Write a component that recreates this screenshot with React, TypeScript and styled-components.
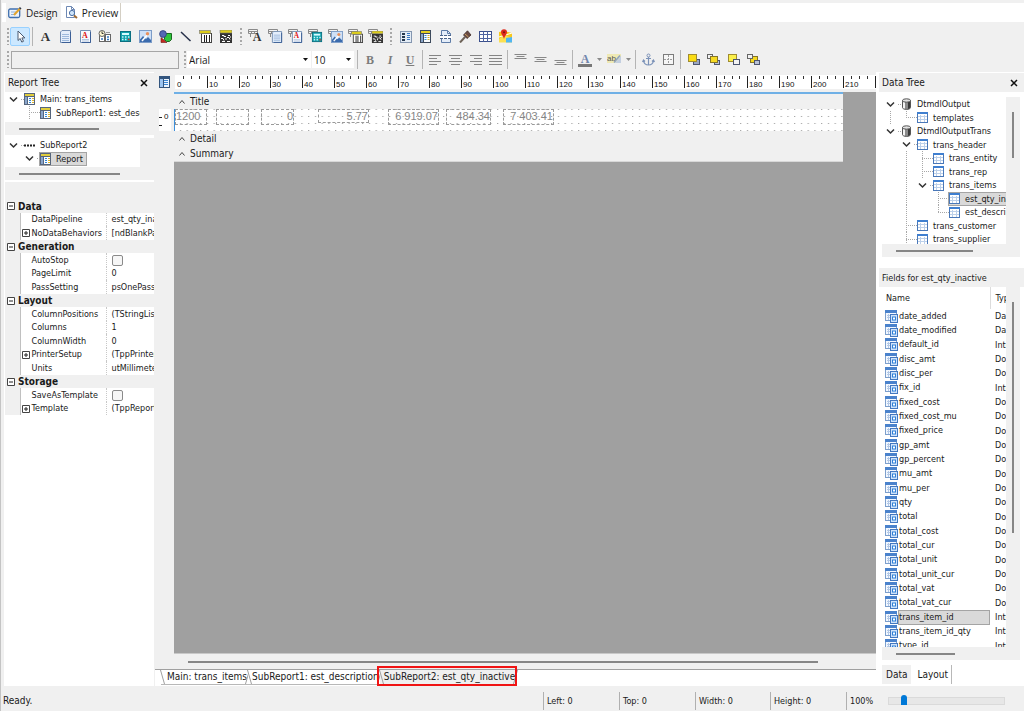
import React, { ReactNode } from 'react';
import styled, { createGlobalStyle, css } from 'styled-components';

const face = '#f0f0f0';
const edge = '#a0a0a0';
const ui = '"DejaVu Sans Condensed", "DejaVu Sans", sans-serif';
const segoe = '"Open Sans", "Noto Sans", sans-serif';

const GlobalStyle = createGlobalStyle`
  * { box-sizing: border-box; }
  html, body { margin: 0; padding: 0; background: ${face}; }
  body { font: 10px/14px ${ui}; color: #1a1a1a; overflow: hidden; }
  button, select, input { font: inherit; color: inherit; margin: 0; padding: 0; }
  svg { display: block; flex: none; }
`;

/* ---------- frame ---------- */

const Window = styled.div`
  display: flex;
  flex-direction: column;
  height: 100vh;
  border-left: 1px solid #c4c4c4;
  background: ${face};
`;

const PageTabs = styled.nav`
  display: flex;
  height: 19px;
  margin: 3px 0 0 1px;
  padding-left: 4px;
  background: #fff;
`;

const PageTab = styled.button<{ $active?: boolean }>`
  display: flex;
  align-items: center;
  gap: 4px;
  padding: 0 2px;
  border: 0;
  background: ${p => (p.$active ? face : '#fff')};
  border-right: 1px solid ${p => (p.$active ? face : '#d4cfc4')};
  font: 10px/18px ${segoe};
  & + & { padding: 0 2px 0 4px; }
`;

const Toolbar = styled.div<{ $tall?: boolean }>`
  display: flex;
  flex: none;
  align-items: center;
  height: ${p => (p.$tall ? 28 : 22)}px;
  padding-left: 5px;
  padding-bottom: ${p => (p.$tall ? 0 : 3)}px;
`;

const Grip = styled.span`
  width: 3px;
  height: 17px;
  margin-left: 1px;
  background: radial-gradient(circle at 1px 1px, #a8a8a8 1px, transparent 1px) 0 0 / 3px 4px;
`;

const Divider = styled.span`
  width: 1px;
  height: 19px;
  margin: 0 2px;
  background: #b4b4b4;
`;

const Tool = styled.button<{ $on?: boolean; $wide?: boolean }>`
  display: flex;
  align-items: center;
  justify-content: center;
  gap: 5px;
  width: ${p => (p.$wide ? 29 : 20)}px;
  height: 19px;
  border: 1px solid ${p => (p.$on ? '#99d1ff' : 'transparent')};
  border-radius: 2px;
  background: ${p => (p.$on ? '#cce8ff' : 'transparent')};
`;

const ToolGroup = styled.div<{ $gap?: number }>`
  display: flex;
  margin-left: ${p => p.$gap ?? 0}px;
`;

const NameBox = styled.input`
  width: 168px;
  height: 18px;
  && { margin: 0 4px 0 1px; }
  border: 1px solid #a6a6a6;
  background: ${face};
`;

const Combo = styled.label<{ $size: number }>`
  display: flex;
  align-items: center;
  width: ${p => p.$size}px;
  height: 17px;
  margin-right: 1px;
  padding-right: 3px;
  background: #fff;
  font: 10px/16px ${segoe};
  select {
    flex: 1;
    min-width: 0;
    height: 16px;
    padding-left: 2px;
    border: 0;
    background: transparent;
    appearance: none;
    outline: none;
  }
`;

const Main = styled.main`
  display: flex;
  flex: 1;
  min-height: 0;
`;

/* ---------- side panels ---------- */

const Side = styled.section<{ $right?: boolean }>`
  display: flex;
  flex: none;
  flex-direction: column;
  width: ${p => (p.$right ? 148 : 150)}px;
  margin-left: ${p => (p.$right ? 0 : 3)}px;
  padding-left: ${p => (p.$right ? 3 : 1)}px;
  background: #fff;
`;

const PanelTitle = styled.header<{ $offset?: number; $small?: boolean }>`
  display: flex;
  flex: none;
  align-items: center;
  justify-content: space-between;
  height: 19px;
  margin-top: ${p => p.$offset ?? 1}px;
  padding: 0 4px 0 3px;
  background: ${face};
  font-size: ${p => (p.$small ? 9 : 10)}px;
  h2 { margin: 0; font: inherit; }
`;

const CloseButton = styled.button`
  padding: 2px;
  border: 0;
  background: transparent;
`;

const ScrollPane = styled.div<{ $h?: number; $inset?: number; $top?: number }>`
  display: grid;
  grid-template: minmax(0, 1fr) 13px / minmax(0, 1fr) 14px;
  ${p => (p.$h ? css`flex: none; height: ${p.$h}px;` : css`flex: 1; min-height: 0;`)}
  margin-top: ${p => p.$top ?? 0}px;
  margin-left: ${p => p.$inset ?? 0}px;
  margin-right: ${p => (p.$inset ? 4 : 0)}px;
  font-size: 9px;
`;

const PaneBody = styled.div`
  overflow: hidden;
  background: #fff;
`;

const VBar = styled.div<{ $from: number; $len: number }>`
  padding: ${p => p.$from}px 0 0 6px;
  background: ${face};
  &::before {
    content: '';
    display: block;
    width: 2px;
    height: ${p => p.$len}px;
    background: ${p => (p.$len ? '#868686' : 'none')};
  }
`;

const HBar = styled.div<{ $len?: number }>`
  grid-column: 1 / -1;
  display: flex;
  align-items: center;
  padding: 0 0 0 14px;
  background: ${face};
  &::before {
    content: '';
    flex: ${p => (p.$len ? 'none' : 1)};
    width: ${p => p.$len ?? 0}px;
    height: 2px;
    background: #868686;
  }
`;

const Tree = styled.ul`
  margin: 0;
  padding: 0;
  list-style: none;
`;

const TreeItem = styled.li`
  display: flex;
  align-items: center;
  height: 14px;
  white-space: nowrap;
  &:nth-child(even) { height: 13px; }
`;

const dotsY = 'repeating-linear-gradient(#a8a8a8 0 1px, transparent 1px 2px)';
const dotsX = 'repeating-linear-gradient(90deg, #a8a8a8 0 1px, transparent 1px 2px)';

const Guide = styled.span<{ $kind: string }>`
  flex: none;
  width: 16px;
  height: 100%;
  display: flex;
  align-items: center;
  justify-content: center;
  background-repeat: no-repeat;
  ${p => p.$kind === '|' && css`background-image: ${dotsY}; background-size: 1px 100%; background-position: 8px 0;`}
  ${p => p.$kind === '+' && css`background-image: ${dotsY}, ${dotsX}; background-size: 1px 100%, 8px 1px; background-position: 8px 0, right center;`}
  ${p => p.$kind === 'L' && css`background-image: ${dotsY}, ${dotsX}; background-size: 1px 50%, 8px 1px; background-position: 8px 0, right center;`}
`;

const Stub = styled.span`
  flex: none;
  width: 3px;
  height: 1px;
  background: ${dotsX};
`;

const NodeLabel = styled.span<{ $selected?: boolean }>`
  display: flex;
  align-items: center;
  gap: 5px;
  height: 12px;
  padding-right: 3px;
  line-height: 12px;
  ${p => p.$selected && css`background: #d9d9d9; box-shadow: 0 0 0 1px #a4a4a4;`}
`;

const Inspector = styled.table`
  width: 100%;
  border-collapse: collapse;
  table-layout: fixed;
  flex: none;
  font-size: 9px;
  tr { height: 14px; }
  tbody tr:nth-child(even) { height: 13px; }
  td, th {
    height: inherit;
    padding: 0;
    overflow: hidden;
    font-weight: normal;
    line-height: 13px;
    text-align: left;
    white-space: nowrap;
  }
`;

const GroupCell = styled.th`
  background: ${face};
  div { display: flex; align-items: center; gap: 3px; padding-left: 2px; font-weight: bold; font-size: 10px; }
`;

const GutterCell = styled.td`
  background: ${face};
  border-right: 1px solid #c0c0c0;
`;

const NameCell = styled.th`
  div { display: flex; align-items: center; }
`;

const ExpandSlot = styled.span`
  flex: none;
  width: 11px;
  padding-left: 1px;
`;

const ValueCell = styled.td`
  border-left: 1px dotted #c8c8c8;
  && { padding-left: 5px; }
  input {
    display: block;
    width: 11px;
    height: 11px;
    border: 1px solid #8a8a8a;
    border-radius: 2px;
    background: #f6f6f6;
    appearance: none;
  }
`;

const InspectorHead = styled.div`
  flex: none;
  height: 17px;
  margin-top: 2px;
  background: ${face};
`;

/* ---------- design surface ---------- */

const Workspace = styled.section`
  display: flex;
  flex: 1;
  flex-direction: column;
  min-width: 0;
  margin-left: 1px;
`;

const RulerRow = styled.div`
  display: flex;
  flex: none;
  align-items: center;
  height: 20px;
  padding-left: 4px;
  gap: 5px;
`;

const RulerTrack = styled.div`
  flex: 1;
  height: 14px;
  overflow: hidden;
  background: #fff;
`;

const Surface = styled.div`
  display: flex;
  flex: 1;
  min-height: 0;
`;

const SideRuler = styled.div`
  flex: none;
  width: 12px;
  height: 22px;
  margin: 17px 3px 0 4px;
  background: #fff;
`;

const Desk = styled.div`
  flex: 1;
  min-width: 0;
  border-bottom: 1px solid #c8c8c8;
  background: #a0a0a0;
`;

const Paper = styled.div`
  width: 669px;
  max-width: 100%;
  border-top: 2px solid #6fb0e6;
  border-bottom: 1px solid #d8d8d8;
  background: ${face};
`;

const Band = styled.div`
  display: flex;
  align-items: center;
  gap: 4px;
  height: 15px;
  padding-left: 4px;
  line-height: 15px;
`;

const Canvas = styled.div`
  position: relative;
  height: 22px;
  border-left: 1px solid #3c8fdc;
  background: #fff;
  overflow: hidden;
`;

const ReportField = styled.div<{ $x: number; $w: number; $short?: boolean; $left?: boolean }>`
  position: absolute;
  top: 0;
  left: ${p => p.$x}px;
  width: ${p => p.$w}px;
  height: ${p => (p.$short ? 14 : 16)}px;
  border: 1px dashed #9a9a9a;
  font: 11px/13px "Liberation Sans", Arial, sans-serif;
  color: #868686;
  text-align: ${p => (p.$left ? 'left' : 'right')};
`;

const SurfaceScroll = styled(HBar)`
  flex: none;
  height: 15px;
  padding: 0 58px 0 33px;
`;

const SheetTabs = styled.nav`
  display: flex;
  flex: none;
  height: 17px;
  padding-left: 6px;
  border-top: 1px solid ${edge};
  background: #fff;
`;

const SheetTab = styled.button<{ $marked?: boolean }>`
  position: relative;
  height: 15px;
  padding: 0 1px 0 6px;
  border: 0;
  background: ${p => (p.$marked ? face : '#fff')};
  line-height: 14px;
  white-space: nowrap;
  border-bottom: 1px solid #b8b8b8;
  & + & { padding-left: 4px; }
  &::before, &::after {
    content: '';
    position: absolute;
    top: 0;
    width: 1px;
    height: 14px;
    background: ${edge};
  }
  &::before { left: 1px; transform: skewX(16deg); }
  &::after { right: 0; transform: skewX(-16deg); }
`;

const Marker = styled.span`
  position: absolute;
  z-index: 1;
  inset: -4px -1px -2px -3px;
  border: 2px solid #f01414;
`;

/* ---------- data panel ---------- */

const FieldTable = styled.table`
  width: 160px;
  border-collapse: collapse;
  table-layout: fixed;
  th, td {
    height: 14px;
    padding: 0 0 0 3px;
    font-weight: normal;
    line-height: 14px;
    text-align: left;
    white-space: nowrap;
  }
  thead th { height: 22px; }
  thead th:first-child { padding-left: 4px; }
  thead th + th { border-left: 1px solid #dcdcdc; }
  tbody tr:nth-child(3n) td { height: 15px; }
  td + td, th + th { padding-left: 5px; }
`;

const FieldName = styled.div<{ $selected?: boolean }>`
  display: flex;
  height: 14px;
  align-items: center;
  gap: 1px;
  span {
    flex: 1;
    line-height: 13px;
    margin-right: 1px;
    ${p => p.$selected && css`background: #d9d9d9; box-shadow: 0 0 0 1px #a4a4a4;`}
  }
`;

const SideTabs = styled.nav`
  display: flex;
  flex: none;
  height: 26px;
  padding: 5px 0 2px 3px;
`;

const SideTab = styled.button<{ $active?: boolean }>`
  padding: 0 3px 0 4px;
  border: 0;
  border-right: 1px solid ${p => (p.$active ? face : '#b8b8b8')};
  background: ${p => (p.$active ? face : '#fff')};
  line-height: 18px;
  & + & { padding: 0 3px 0 6px; }
`;

/* ---------- status bar ---------- */

const StatusBar = styled.footer`
  display: flex;
  flex: none;
  align-items: center;
  height: 25px;
  padding: 5px 19px 1px 2px;
`;

const StatusCell = styled.span<{ $w?: number }>`
  ${p => (p.$w ? css`flex: none; width: ${p.$w}px; padding-left: 3px; border-left: 1px solid #b0b0b0; font-size: 9px;` : css`flex: 1;`)}
  line-height: 18px;
`;

const Zoom = styled.input`
  width: 117px;
  height: 12px;
  appearance: none;
  background: transparent;
  &::-webkit-slider-runnable-track {
    height: 8px;
    border: 1px solid #dadada;
    background: #e7e7e7;
  }
  &::-webkit-slider-thumb {
    appearance: none;
    width: 6px;
    height: 10px;
    margin-top: -3px;
    border-radius: 3px 3px 0 0;
    background: #0078d7;
  }
`;

/* ---------- drawings ---------- */

const Svg = ({ w = 13, h = 13, children }: { w?: number; h?: number; children: ReactNode }) => (
  <svg width={w} height={h} viewBox={`0 0 ${w} ${h}`} aria-hidden="true">{children}</svg>
);

const Chevron = () => (
  <Svg w={9} h={7}><path d="M1 1.5 4.5 5 8 1.5" fill="none" stroke="#333" strokeWidth="1.5" /></Svg>
);
const Caret = () => (
  <Svg w={8} h={6}><path d="M1.5 4.5 4 1.5 6.5 4.5" fill="none" stroke="#444" /></Svg>
);
const Drop = ({ pale }: { pale?: boolean }) => (
  <Svg w={5} h={3}><path d="M0 0H5L2.5 3Z" fill={pale ? '#8a8a8a' : '#111'} /></Svg>
);
const CloseX = () => (
  <Svg w={8} h={8}><path d="M1 1 7 7M7 1 1 7" stroke="#111" strokeWidth="1.5" /></Svg>
);
const Box = ({ plus }: { plus?: boolean }) => (
  <Svg w={8} h={8}>
    <path d="M.5.5h7v7h-7z" fill="#fff" stroke="#444" />
    <path d={plus ? 'M2 4h4M4 2v4' : 'M2 4h4'} stroke="#222" />
  </Svg>
);
const ReportGlyph = () => (
  <Svg w={11} h={12}>
    <rect x=".5" y=".5" width="10" height="11" fill="#fbfdff" stroke="#56657c" />
    <rect x="1" y="1" width="9" height="2" fill="#e0cd3c" />
    <rect x="1" y="3" width="2" height="8" fill="#8aa6cc" />
    <path d="M3.5 3v8M1 3.5h9" stroke="#56657c" />
    <path d="M5 5.500h2M5 7.500h2M5 9.500h2" stroke="#2f86d8" />
    <path d="M8 5.500h2M8 7.500h2M8 9.500h2" stroke="#e0b52c" />
  </Svg>
);
const BandGlyph = () => (
  <Svg w={11} h={5}><path d="M0 2.500h2M3 2.500h2M6 2.500h2M9 2.500h2" stroke="#222" strokeWidth="2" /></Svg>
);
const TableGlyph = () => (
  <Svg w={11} h={11}>
    <rect x=".5" y="1.5" width="10" height="9" fill="#fff" stroke="#4a78b8" />
    <rect x="0" y="0" width="11" height="2" fill="#3f7fd0" />
    <path d="M3.500 3v7M7.500 3v7M1 4.500h9M1 7.500h9" stroke="#bcd0ea" />
  </Svg>
);
const CylinderGlyph = () => (
  <Svg w={11} h={12}>
    <path d="M1.500 2.500v7c0 2.500 8 2.500 8 0v-7z" fill="#8c8c8c" stroke="#555" />
    <path d="M2 3.500h2v7H3L2 10z" fill="#f4f4f4" />
    <path d="M7 4h2v6l-2 1z" fill="#3a3a3a" />
    <ellipse cx="5.500" cy="2.500" rx="4" ry="1.700" fill="#e2e2e2" stroke="#555" />
  </Svg>
);
const FieldGlyph = () => (
  <Svg w={13} h={13}>
    <rect x=".5" y="1.500" width="11" height="9" fill="#f3f8ff" stroke="#7d9fcc" />
    <rect x="0" y="0" width="12" height="3" fill="#4a82cc" />
    <path d="M2 5.500h3M2 7.500h3M3.500 4v6" stroke="#b4c9e6" />
    <rect x="5.500" y="4.500" width="7" height="8" fill="#cfe3fa" stroke="#4478c0" />
    <rect x="7.500" y="7" width="3" height="3" fill="#fff" stroke="#2f80d8" />
  </Svg>
);

const Pointer = () => (
  <Svg><path d="M4 1v9.500l2.200-2 1.600 3.600 1.700-.8-1.600-3.400h3z" fill="#fff" stroke="#4a5a70" /></Svg>
);
const LetterA = () => (
  <Svg><text x="6.500" y="11" textAnchor="middle" fontFamily="Liberation Serif, serif" fontWeight="bold" fontSize="13" fill="#333">A</text></Svg>
);
const Memo = () => (
  <Svg>
    <path d="M3 .5h8.500v12h-10V2z" fill="#e4eefb" stroke="#7590b4" />
    <path d="M3 4.500h7M3 6.500h7M3 8.500h7M3 10.500h7" stroke="#9db9dc" />
    <path d="M11.500 2v10.500H3" fill="none" stroke="#3c5f96" />
  </Svg>
);
const RichText = () => (
  <Svg>
    <path d="M1.500.5h10v12h-10z" fill="#f6f9fe" stroke="#7590b4" />
    <text x="6" y="7.500" textAnchor="middle" fontFamily="Liberation Serif, serif" fontWeight="bold" fontSize="8" fill="#e01010">A</text>
    <path d="M3 9.500h7M3 11h7" stroke="#b5c7de" />
    <path d="M11.500 2v10.500H3" fill="none" stroke="#3c5f96" />
  </Svg>
);
const Clock = () => (
  <Svg w={14}>
    <rect x="1.500" y="5.500" width="5" height="6" fill="#fff" stroke="#666" />
    <rect x="7.500" y="4.500" width="5" height="7" fill="#fff" stroke="#666" />
    <circle cx="4" cy="3.500" r="3" fill="#fff7d0" stroke="#666" />
    <path d="M4 1.500v2h1.500" fill="none" stroke="#333" />
    <path d="M8 2.500h4" stroke="#999" />
    <path d="M3 9h2M9 7h2M9 9.500h2" stroke="#3478c0" strokeWidth="1.500" />
  </Svg>
);
const Calculator = () => (
  <Svg>
    <rect x="1.500" y="1.500" width="10" height="10" fill="#12a3ae" stroke="#0b6f80" />
    <rect x="3" y="3" width="7" height="2" fill="#d6fbff" />
    <path d="M3 7h1.500M6 7h1.500M9 7h1.500M3 9.500h1.500M6 9.500h1.500" stroke="#c8f7fa" strokeWidth="1.500" />
    <path d="M9 9.500h1.500" stroke="#d83020" strokeWidth="1.500" />
  </Svg>
);
const Picture = () => (
  <Svg>
    <rect x=".5" y=".5" width="12" height="12" fill="#cfe0f6" stroke="#7c9cc8" />
    <path d="M1 9.500 4 6l3 3 2-2 3 3v2H1z" fill="#3c6cae" />
    <path d="M3 11 9 4" stroke="#fff" strokeWidth="1.500" />
    <circle cx="8.500" cy="3.800" r="1.700" fill="#e8905c" />
  </Svg>
);
const Shapes = () => (
  <Svg>
    <path d="M2 7.500 8 12.500H2z" fill="#c32a20" stroke="#6c1914" strokeWidth=".6" />
    <path d="M5.500 3.500h7v6l-2 2h-3l-2-2z" fill="#2fc43c" stroke="#1a6a20" />
    <circle cx="4" cy="4" r="3.400" fill="#5468b4" stroke="#303f7c" strokeWidth=".8" />
  </Svg>
);
const LineTool = () => (
  <Svg><path d="M2 2 11.500 11" stroke="#26304a" strokeWidth="1.500" /></Svg>
);
const Barcode = () => (
  <Svg>
    <rect x="2.500" y="3.500" width="10" height="9" fill="#fff" stroke="#444" />
    <path d="M5.500 5v7M7.500 5v7M10.500 5v7" stroke="#222" />
    <rect x=".5" y=".5" width="11" height="3" fill="#ddcd1c" stroke="#777" strokeWidth=".6" />
  </Svg>
);
const Matrix = () => (
  <Svg>
    <rect x="1" y="3" width="12" height="10" fill="#333" />
    <rect x="1" y="0" width="12" height="3" fill="#ddcd1c" stroke="#777" strokeWidth=".6" />
    <path d="M3 5.500h2v1h2M9 5.500h2M2 8.500h2l1 2M8 7.500h2l1 2M3 11.500h3M8 11.500h3M7 8v2M11 7h1" fill="none" stroke="#fff" />
  </Svg>
);
const DataBound = ({ children }: { children: ReactNode }) => (
  <Svg w={15} h={14}>
    <path d="M.5.5h9v4h-9zM.5 2.500h9M3.500 2.500v2M6.500 2.500v2" fill="#f4f4f4" stroke="#8a8a8a" />
    <path d="M2.500 5v3" stroke="#8a8a8a" />
    <svg x="3" y="2" width="12" height="12" viewBox="0 0 13 13">{children}</svg>
  </Svg>
);
const RegionTool = () => (
  <Svg>
    <rect x="1.500" y="1.500" width="11" height="11" fill="#e3ecf6" stroke="#8496b0" />
    <path d="M3 4h3M3 7h3M3 10h3" stroke="#26384f" strokeWidth="2" />
    <path d="M8 3.500h3M8 5.500h3M8 7.500h3M8 9.500h3" stroke="#3a78c4" />
  </Svg>
);
const SubReportTool = () => (
  <Svg>
    <rect x="1.500" y=".5" width="10" height="12" fill="#fbfdff" stroke="#3d4a5c" />
    <rect x="2" y="1" width="9" height="2" fill="#e6cf20" />
    <rect x="2" y="4" width="2" height="8" fill="#88a4c8" />
    <path d="M4.500 3.500v9M2 3.500h9" stroke="#3d4a5c" />
    <path d="M5.500 5.500h2M5.500 7.500h2M5.500 9.500h2" stroke="#2f86d8" />
    <path d="M8.500 5.500h2M8.500 7.500h2M8.500 9.500h2" stroke="#d8ad20" />
  </Svg>
);
const PageBreak = () => (
  <Svg>
    <path d="M2.500.5h6l3 3v9h-9z" fill="#e4edf9" stroke="#5f7da8" />
    <path d="M8.500.5v3h3" fill="none" stroke="#5f7da8" />
    <rect x="1" y="6" width="12" height="3" fill="#fff" />
    <path d="M1 5.500h12M1 8.500h12" stroke="#4c648a" strokeDasharray="3 1" />
  </Svg>
);
const Brush = () => (
  <Svg>
    <path d="M1 12.500 6 7" stroke="#6d6258" strokeWidth="2" />
    <path d="M4.500 5 8 8.500 12 5 8.500.8z" fill="#6a4a42" stroke="#3e2c2a" strokeWidth=".8" />
    <path d="M6 4 9.500 7" stroke="#c9a25e" />
  </Svg>
);
const GridTool = () => (
  <Svg>
    <rect x=".5" y="1.500" width="12" height="10" fill="#fff" stroke="#3a4f8c" />
    <path d="M.5 4.500h12M.5 8.500h12M4.500 1.500v10M8.500 1.500v10" stroke="#5064a0" />
  </Svg>
);
const MapTool = () => (
  <Svg w={15} h={14}>
    <path d="M1 3l5-1 8 2v9H1z" fill="#f8c81c" />
    <path d="M1 10 6 6l8 3v4.500H1z" fill="#fbe050" />
    <path d="M8 13.500V9l6-1v5.500z" fill="#4fb6f2" />
    <path d="M1 8 14 4" stroke="#fff" />
    <path d="M6 10C5.500 7 3 5.500 3 3.200a3 3 0 0 1 6 0C9 5.500 6.500 7 6 10z" fill="#dc2a1c" />
    <circle cx="6" cy="3.200" r="1" fill="#7c120c" />
  </Svg>
);

const StyleLetter = styled.span<{ $italic?: boolean; $line?: boolean }>`
  font: ${p => (p.$italic ? 'italic' : 'normal')} bold 12px/14px "Liberation Serif", serif;
  color: #7c7c7c;
  text-decoration: ${p => (p.$line ? 'underline' : 'none')};
`;

const AlignLines = ({ rows }: { rows: [number, number][] }) => (
  <Svg>{rows.map(([x, w], i) => <path key={i} d={`M${x} ${2 + i * 3}.5h${w}`} stroke="#858585" />)}</Svg>
);
const VAlign = ({ top }: { top: number }) => (
  <Svg><path d={`M.5 ${top}.5h12M2.500 ${top + 2}.5h8M.5 ${top + 4}.5h12`} stroke="#888" /></Svg>
);
const FontColor = () => (
  <Svg w={14} h={14}>
    <text x="7" y="10" textAnchor="middle" fontFamily="Liberation Serif, serif" fontWeight="bold" fontSize="12" fill="#7185ac">A</text>
    <rect x="0" y="11" width="14" height="3" fill="#777" />
  </Svg>
);
const Highlight = () => (
  <Svg w={14} h={14}>
    <rect x="0" y="1" width="14" height="9" fill="#efe9b4" />
    <path d="M8 10 14 3v7z" fill="#c3cfe0" />
    <text x="0" y="7.500" fontFamily="Liberation Sans, sans-serif" fontSize="8" fill="#555">ab</text>
    <path d="M7 9.500 13 2.500" stroke="#8ea3c0" strokeWidth="1.500" />
  </Svg>
);
const Anchor = () => (
  <Svg>
    <circle cx="6.500" cy="2.500" r="1.500" fill="none" stroke="#7b92b8" />
    <path d="M6.500 4v8M4 5.500h5M1.500 7.500C2 11 4.500 12 6.500 12s4.500-1 5-4.500M.5 9l1-2 1.500 1.500M12.500 9l-1-2L10 8.500" fill="none" stroke="#7b92b8" strokeWidth="1.200" />
  </Svg>
);
const Borders = () => (
  <Svg>
    <rect x="1.500" y="1.500" width="10" height="10" fill="#f6f6f6" stroke="#7c7c7c" />
    <path d="M6.500 2v9M2 6.500h9" stroke="#9c9c9c" strokeDasharray="2 1" />
  </Svg>
);
const Layer = ({ back }: { back?: boolean }) => (
  <Svg>
    {!back && <rect x="6.500" y="6.500" width="6" height="5" fill="#9aa6c4" stroke="#4d556e" />}
    <rect x="1.500" y="1.500" width="8" height="7" fill={back ? '#fbf04a' : '#fadc14'} stroke="#a08c30" />
    {back && <rect x="6.500" y="6.500" width="6" height="5" fill="#f4f4f4" stroke="#4d556e" />}
  </Svg>
);
const StepLayer = ({ forward }: { forward?: boolean }) => {
  const grey = (
    <g key="g">
      <rect x=".5" y="1.500" width="5" height="4" fill="#f2f2f2" stroke="#666" />
      <rect x="7.500" y="7.500" width="5" height="4" fill="#b9c2d8" stroke="#4d556e" />
    </g>
  );
  const gold = <rect key="y" x="3.500" y="3.500" width="7" height="6" fill="#f6da22" stroke="#857528" />;
  return <Svg>{forward ? [grey, gold] : [gold, grey]}</Svg>;
};
const DesignGlyph = () => (
  <Svg w={14}>
    <rect x=".7" y="3" width="11" height="8.500" rx="1.500" fill="#eaf2fc" stroke="#3f6fae" strokeWidth="1.300" />
    <path d="M3 6h5M3 8.500h4" stroke="#8eb0da" />
    <path d="M6 9 12 2.500" stroke="#e2a42c" strokeWidth="2" />
    <path d="M11.500 1.500l1.500 1.500" stroke="#30384a" strokeWidth="1.500" />
  </Svg>
);
const PreviewGlyph = () => (
  <Svg w={13}>
    <path d="M1.500.5h5l3 3v8h-8z" fill="#fff" stroke="#6e89b4" />
    <path d="M6.500.5v3h3" fill="none" stroke="#6e89b4" />
    <circle cx="7" cy="7" r="2.600" fill="#cfe5fa" stroke="#4a6fa4" />
    <path d="M9 9.500l3 2.500" stroke="#a06a30" strokeWidth="2" />
  </Svg>
);

const Ruler = () => {
  const step = 31.8;
  return (
    <svg width="760" height="14" aria-label="Horizontal ruler">
      {Array.from({ length: 23 }, (_, i) => (
        <g key={i}>
          {i > 0 && <path d={`M${Math.round(i * step)}.5 1v12`} stroke="#222" />}
          {[1, 2, 3].map(q => (
            <path key={q} d={`M${Math.round((i + q / 4) * step)}.5 1v3`} stroke="#333" />
          ))}
          {i < 22 && (
            <text x={Math.round(i * step) + 2} y="12" fontFamily="Liberation Sans, sans-serif" fontSize="8" fill="#111">{i * 10}</text>
          )}
        </g>
      ))}
    </svg>
  );
};

const CornerGlyph = () => (
  <Svg w={11} h={12}>
    <rect x="0" y="0" width="11" height="12" fill="#33557e" />
    <rect x="1" y="3" width="3" height="8" fill="#9cc4f0" />
    <rect x="5" y="3" width="5" height="8" fill="#eef5fd" />
    <path d="M5 4.500h4M5 6.500h4M5 8.500h4" stroke="#3a86d4" />
  </Svg>
);

const DotGrid = () => (
  <svg width="100%" height="22" aria-hidden="true">
    <defs>
      <pattern id="dots" width="6.75" height="7" patternUnits="userSpaceOnUse">
        <rect x="5" y="0" width="1" height="1" fill="#909090" />
      </pattern>
    </defs>
    <rect width="100%" height="22" fill="url(#dots)" />
  </svg>
);

/* ---------- content ---------- */

type Node = { label: string; guides: string; icon: ReactNode; selected?: boolean };

const mainNodes: Node[] = [
  { label: 'Main: trans_items', guides: 'v', icon: <ReportGlyph /> },
  { label: 'SubReport1: est_description', guides: ' +', icon: <ReportGlyph /> },
];
const subNodes: Node[] = [
  { label: 'SubReport2', guides: 'v', icon: <BandGlyph /> },
  { label: 'Report', guides: ' v', icon: <ReportGlyph />, selected: true },
];
const dataNodes: Node[] = [
  { label: 'DtmdlOutput', guides: 'v', icon: <CylinderGlyph /> },
  { label: 'templates', guides: '|L', icon: <TableGlyph /> },
  { label: 'DtmdlOutputTrans', guides: 'v', icon: <CylinderGlyph /> },
  { label: 'trans_header', guides: ' v', icon: <TableGlyph /> },
  { label: 'trans_entity', guides: ' |+', icon: <TableGlyph /> },
  { label: 'trans_rep', guides: ' |+', icon: <TableGlyph /> },
  { label: 'trans_items', guides: ' |v', icon: <TableGlyph /> },
  { label: 'est_qty_inactive', guides: ' | +', icon: <TableGlyph />, selected: true },
  { label: 'est_description', guides: ' | L', icon: <TableGlyph /> },
  { label: 'trans_customer', guides: ' +', icon: <TableGlyph /> },
  { label: 'trans_supplier', guides: ' +', icon: <TableGlyph /> },
];

const NodeList = ({ nodes }: { nodes: Node[] }) => (
  <Tree>
    {nodes.map(n => (
      <TreeItem key={n.label}>
        {n.guides.split('').map((g, i) => <Guide key={i} $kind={g}>{g === 'v' && <Chevron />}</Guide>)}
        <Stub />
        <NodeLabel $selected={n.selected}>{n.icon}{n.label}</NodeLabel>
      </TreeItem>
    ))}
  </Tree>
);

type Prop = { group?: string; name?: string; value?: string; plus?: boolean; check?: boolean };
const props: Prop[] = [
  { group: 'Data' },
  { name: 'DataPipeline', value: 'est_qty_inactive' },
  { name: 'NoDataBehaviors', value: '[ndBlankPage]', plus: true },
  { group: 'Generation' },
  { name: 'AutoStop', check: true },
  { name: 'PageLimit', value: '0' },
  { name: 'PassSetting', value: 'psOnePass' },
  { group: 'Layout' },
  { name: 'ColumnPositions', value: '(TStringList)' },
  { name: 'Columns', value: '1' },
  { name: 'ColumnWidth', value: '0' },
  { name: 'PrinterSetup', value: '(TppPrinter)', plus: true },
  { name: 'Units', value: 'utMillimeters' },
  { group: 'Storage' },
  { name: 'SaveAsTemplate', check: true },
  { name: 'Template', value: '(TppReportTemplate)', plus: true },
];

const fields: [string, string][] = [
  ['date_added', 'Date'], ['date_modified', 'Date'], ['default_id', 'Integer'], ['disc_amt', 'Double'],
  ['disc_per', 'Double'], ['fix_id', 'Integer'], ['fixed_cost', 'Double'], ['fixed_cost_mu', 'Double'],
  ['fixed_price', 'Double'], ['gp_amt', 'Double'], ['gp_percent', 'Double'], ['mu_amt', 'Double'],
  ['mu_per', 'Double'], ['qty', 'Double'], ['total', 'Double'], ['total_cost', 'Double'],
  ['total_cur', 'Double'], ['total_unit', 'Double'], ['total_unit_cur', 'Double'], ['total_vat', 'Double'],
  ['total_vat_cur', 'Double'], ['trans_item_id', 'Integer'], ['trans_item_id_qty', 'Integer'], ['type_id', 'Integer'],
];

const reportFields: { x: number; w: number; text?: string; short?: boolean; left?: boolean }[] = [
  { x: 0, w: 32, text: '1200', left: true },
  { x: 41, w: 33 },
  { x: 86, w: 33, text: '0' },
  { x: 143, w: 51, text: '5.77', short: true },
  { x: 213, w: 51, text: '6 919.07' },
  { x: 271, w: 45, text: '484.34' },
  { x: 328, w: 51, text: '7 403.41' },
];

const components: [string, ReactNode][] = [
  ['Label', <LetterA />], ['Memo', <Memo />], ['Rich text', <RichText />], ['System variable', <Clock />],
  ['Variable', <Calculator />], ['Image', <Picture />], ['Shape', <Shapes />], ['Line', <LineTool />],
  ['Barcode', <Barcode />], ['2D barcode', <Matrix />],
];
const dataComponents: [string, ReactNode][] = [
  ['Data text', <LetterA />], ['Data memo', <Memo />], ['Data rich text', <RichText />], ['Calculation', <Calculator />],
  ['Data image', <Picture />], ['Data barcode', <Barcode />], ['Data 2D barcode', <Matrix />],
];
const advanced: [string, ReactNode][] = [
  ['Region', <RegionTool />], ['Subreport', <SubReportTool />], ['Page break', <PageBreak />],
  ['Paint box', <Brush />], ['Table grid', <GridTool />], ['Map', <MapTool />],
];

const Tools = ({ items, bound, gap }: { items: [string, ReactNode][]; bound?: boolean; gap?: number }) => (
  <ToolGroup $gap={gap}>
    {items.map(([name, icon]) => (
      <Tool key={name} aria-label={name}>{bound ? <DataBound>{icon}</DataBound> : icon}</Tool>
    ))}
  </ToolGroup>
);

export default function App() {
  return (
    <Window>
      <GlobalStyle />
      <PageTabs>
        <PageTab $active><DesignGlyph />Design</PageTab>
        <PageTab><PreviewGlyph />Preview</PageTab>
      </PageTabs>

      <Toolbar $tall>
        <Grip />
        <Tool $on aria-label="Select"><Pointer /></Tool>
        <Divider />
        <Tools items={components} />
        <ToolGroup $gap={4}><Grip /></ToolGroup>
        <Tools items={dataComponents} bound gap={2} />
        <ToolGroup $gap={4}><Grip /></ToolGroup>
        <Tools items={advanced} gap={2} />
      </Toolbar>

      <Toolbar>
        <Grip />
        <NameBox aria-label="Component value" />
        <Grip />
        <Combo $size={124}>
          <select aria-label="Font name"><option>Arial</option></select>
          <Drop />
        </Combo>
        <Combo $size={42}>
          <select aria-label="Font size"><option>10</option></select>
          <Drop />
        </Combo>
        <Divider />
        <Tool aria-label="Bold"><StyleLetter>B</StyleLetter></Tool>
        <Tool aria-label="Italic"><StyleLetter $italic>I</StyleLetter></Tool>
        <Tool aria-label="Underline"><StyleLetter $line>U</StyleLetter></Tool>
        <Divider />
        <Tool aria-label="Align left"><AlignLines rows={[[0, 12], [0, 8], [0, 12], [0, 8]]} /></Tool>
        <Tool aria-label="Center"><AlignLines rows={[[0, 13], [2, 9], [0, 13], [2, 9]]} /></Tool>
        <Tool aria-label="Align right"><AlignLines rows={[[1, 12], [5, 8], [1, 12], [5, 8]]} /></Tool>
        <Tool aria-label="Justify"><AlignLines rows={[[0, 13], [0, 13], [0, 13], [0, 13]]} /></Tool>
        <Divider />
        <Tool aria-label="Align top"><VAlign top={1} /></Tool>
        <Tool aria-label="Align middle"><VAlign top={4} /></Tool>
        <Tool aria-label="Align bottom"><VAlign top={7} /></Tool>
        <Divider />
        <Tool $wide aria-label="Font colour"><FontColor /><Drop pale /></Tool>
        <Tool $wide aria-label="Highlight colour"><Highlight /><Drop pale /></Tool>
        <Divider />
        <Tool aria-label="Anchors"><Anchor /></Tool>
        <Tool aria-label="Borders"><Borders /></Tool>
        <Divider />
        <Tool aria-label="Bring to front"><Layer /></Tool>
        <Tool aria-label="Bring forward"><StepLayer forward /></Tool>
        <Tool aria-label="Send to back"><Layer back /></Tool>
        <Tool aria-label="Send backward"><StepLayer /></Tool>
      </Toolbar>

      <Main>
        <Side>
          <PanelTitle>
            <h2>Report Tree</h2>
            <CloseButton aria-label="Close report tree"><CloseX /></CloseButton>
          </PanelTitle>
          <ScrollPane $h={43}>
            <PaneBody><NodeList nodes={mainNodes} /></PaneBody>
            <VBar $from={0} $len={0} />
            <HBar $len={80} />
          </ScrollPane>
          <ScrollPane $h={42} $top={3}>
            <PaneBody><NodeList nodes={subNodes} /></PaneBody>
            <VBar $from={0} $len={0} />
            <HBar $len={101} />
          </ScrollPane>
          <InspectorHead />
          <Inspector>
            <colgroup><col width="15" /><col width="86" /><col /></colgroup>
            <tbody>
              {props.map(p => (
                <tr key={p.group ?? p.name}>
                  {p.group ? (
                    <GroupCell colSpan={3}><div><Box />{p.group}</div></GroupCell>
                  ) : (
                    <>
                      <GutterCell />
                      <NameCell scope="row"><div><ExpandSlot>{p.plus && <Box plus />}</ExpandSlot>{p.name}</div></NameCell>
                      <ValueCell>{p.check ? <input type="checkbox" aria-label={p.name} /> : p.value}</ValueCell>
                    </>
                  )}
                </tr>
              ))}
            </tbody>
          </Inspector>
        </Side>

        <Workspace>
          <RulerRow>
            <CornerGlyph />
            <RulerTrack><Ruler /></RulerTrack>
          </RulerRow>
          <Surface>
            <SideRuler>
              <Svg w={12} h={22}>
                <path d="M0 8.500h3M0 16.500h3" stroke="#222" />
                <text x="5" y="10" fontFamily="Liberation Sans, sans-serif" fontSize="8" fill="#111">0</text>
              </Svg>
            </SideRuler>
            <Desk>
              <Paper>
                <Band><Caret />Title</Band>
                <Canvas>
                  <DotGrid />
                  {reportFields.map(f => (
                    <ReportField key={f.x} $x={f.x} $w={f.w} $short={f.short} $left={f.left}>{f.text}</ReportField>
                  ))}
                </Canvas>
                <Band><Caret />Detail</Band>
                <Band><Caret />Summary</Band>
              </Paper>
            </Desk>
          </Surface>
          <SurfaceScroll />
          <SheetTabs>
            <SheetTab>Main: trans_items</SheetTab>
            <SheetTab>SubReport1: est_description</SheetTab>
            <SheetTab $marked>SubReport2: est_qty_inactive<Marker /></SheetTab>
          </SheetTabs>
        </Workspace>

        <Side $right>
          <PanelTitle>
            <h2>Data Tree</h2>
            <CloseButton aria-label="Close data tree"><CloseX /></CloseButton>
          </PanelTitle>
          <ScrollPane $h={160} $inset={3} $top={5}>
            <PaneBody><NodeList nodes={dataNodes} /></PaneBody>
            <VBar $from={15} $len={46} />
            <HBar $len={77} />
          </ScrollPane>
          <PanelTitle $offset={11} $small><h2>Fields for est_qty_inactive</h2></PanelTitle>
          <ScrollPane $inset={3}>
            <PaneBody>
              <FieldTable>
                <colgroup><col width="108" /><col /></colgroup>
                <thead><tr><th>Name</th><th>Type</th></tr></thead>
                <tbody>
                  {fields.map(([name, type]) => (
                    <tr key={name}>
                      <td><FieldName $selected={name === 'trans_item_id'}><FieldGlyph /><span>{name}</span></FieldName></td>
                      <td>{type}</td>
                    </tr>
                  ))}
                </tbody>
              </FieldTable>
            </PaneBody>
            <VBar $from={15} $len={231} />
            <HBar $len={59} />
          </ScrollPane>
          <SideTabs>
            <SideTab $active>Data</SideTab>
            <SideTab>Layout</SideTab>
          </SideTabs>
        </Side>
      </Main>

      <StatusBar>
        <StatusCell>Ready.</StatusCell>
        <StatusCell $w={76}>Left: 0</StatusCell>
        <StatusCell $w={76}>Top: 0</StatusCell>
        <StatusCell $w={75}>Width: 0</StatusCell>
        <StatusCell $w={76}>Height: 0</StatusCell>
        <StatusCell $w={42}>100%</StatusCell>
        <Zoom type="range" min={0} max={100} defaultValue={11} aria-label="Zoom" />
      </StatusBar>
    </Window>
  );
}
